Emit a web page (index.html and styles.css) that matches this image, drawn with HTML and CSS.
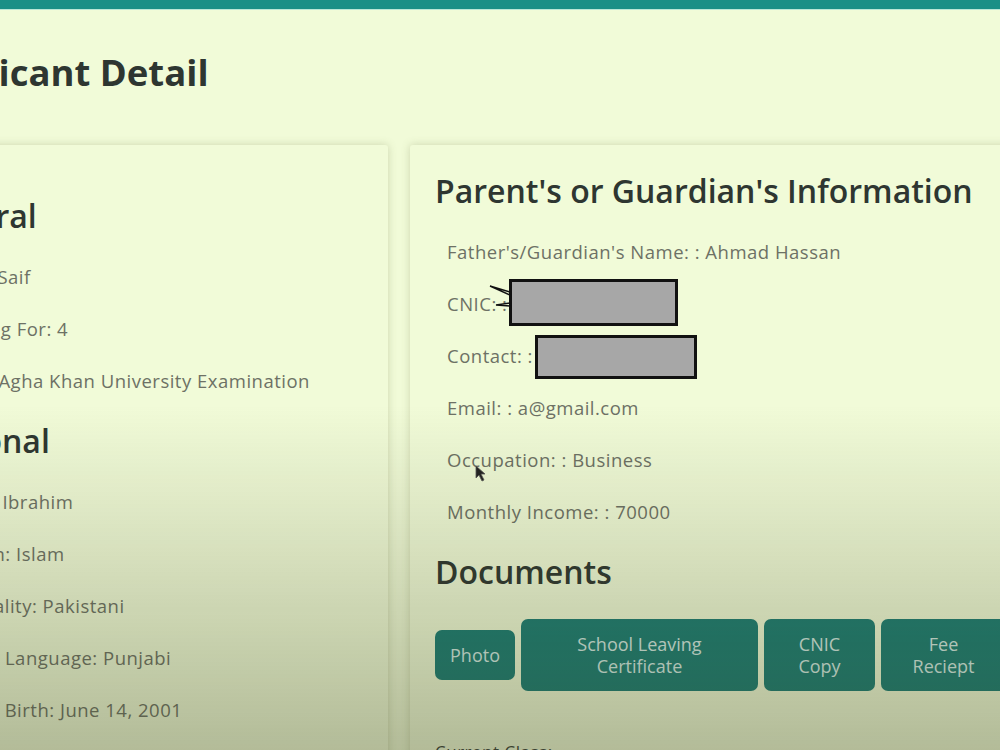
FILE: index.html
```
<!DOCTYPE html>
<html lang="en">
<head>
    <meta charset="UTF-8">
    <meta name="viewport" content="width=device-width, initial-scale=1.0">
    <title>Applicant Detail</title>
    <link rel="stylesheet" href="styles.css">
</head>
<body>
    <header class="topbar"></header>

    <main class="page">
        <h1 class="page-title">Applicant Detail</h1>

        <div class="columns">
            <section class="card card-left">
                <h2>General</h2>
                <p class="item">Name: Saif</p>
                <p class="item">Applying For: 4</p>
                <p class="item">Board: Agha Khan University Examination</p>

                <h2>Personal</h2>
                <p class="item">Father: Ibrahim</p>
                <p class="item">Religion: Islam</p>
                <p class="item">Nationality: Pakistani</p>
                <p class="item">Mother Language: Punjabi</p>
                <p class="item">Date of Birth: June 14, 2001</p>
            </section>

            <section class="card card-right">
                <h2>Parent's or Guardian's Information</h2>
                <p class="item">Father's/Guardian's Name: : Ahmad Hassan</p>
                <p class="item">CNIC: : <span class="redact redact-cnic"><svg class="tail" width="24" height="26" viewBox="0 0 24 26"><path d="M22 7 L2 1 L22 10 M22 18 L8 20 L22 21" fill="none" stroke="#111" stroke-width="1.4"/></svg></span></p>
                <p class="item">Contact: : <span class="redact redact-contact"></span></p>
                <p class="item">Email: : a@gmail.com</p>
                <p class="item">Occupation: : Business<svg class="cursor" width="12" height="18" viewBox="0 0 12 18"><path d="M1 1 L1 13 L4 10 L7 16 L9 15 L6 9 L10 9 Z" fill="#222" stroke="#555" stroke-width="0.8"/></svg></p>
                <p class="item">Monthly Income: : 70000</p>

                <h2>Documents</h2>
                <div class="docs">
                    <button class="doc-btn doc-btn-short">Photo</button>
                    <button class="doc-btn">School Leaving Certificate</button>
                    <button class="doc-btn">CNIC Copy</button>
                    <button class="doc-btn">Fee Reciept</button>
                </div>

                <p class="item item-small">Current Class:</p>
            </section>
        </div>
    </main>
</body>
</html>
```

FILE: styles.css
```
/* Applicant detail page */
html, body {
    height: 100%;
}
body {
    margin: 0;
    overflow: hidden;
    font-family: "Open Sans", "Noto Sans", sans-serif;
    background-color: #f1fbd8;
    color: #6d7165;
}
/* darkening toward the bottom of the captured frame */
body::after {
    content: "";
    position: fixed;
    inset: 0;
    pointer-events: none;
    background: linear-gradient(to bottom, rgba(60, 66, 30, 0) 54%, rgba(60, 66, 30, 0.16) 76%, rgba(60, 66, 30, 0.34) 100%);
}
.topbar {
    height: 9px;
    background-color: #1a8f86;
    border-bottom: 1px solid #b9e6d6;
}
.page {
    margin-left: -104px;
}
.page-title {
    margin: 0;
    padding: 42px 0 0 20px;
    height: 92px;
    box-sizing: border-box;
    font-size: 36.5px;
    font-weight: 700;
    line-height: 40px;
    color: #2e3631;
}
.columns {
    display: grid;
    grid-template-columns: 492px 660px;
    gap: 22px;
    margin-top: 43px;
}
.card {
    background-color: #f1fbd8;
    padding: 12px 25px;
    box-shadow: 0 0 8px rgba(120, 130, 80, 0.3);
    border-radius: 3px;
    min-height: 640px;
}
.card h2 {
    margin: 12px 0 13px;
    font-size: 32px;
    font-weight: 600;
    line-height: 44px;
    color: #2e3631;
}
.card-left h2 {
    margin-left: -6px;
}
.card-left h2:first-child {
    margin-top: 37px;
}
.item {
    position: relative;
    margin: 0;
    padding-left: 12px;
    font-size: 18.5px;
    letter-spacing: 0.5px;
    line-height: 52px;
    height: 52px;
    white-space: nowrap;
}
.redact {
    position: relative;
    top: -4px;
    display: inline-block;
    vertical-align: middle;
    box-sizing: border-box;
    background-color: #a7a7a7;
    border: 3px solid #111;
}
.redact-cnic {
    width: 169px;
    height: 47px;
    margin-left: -4px;
}
.redact-contact {
    width: 162px;
    height: 44px;
    margin-left: -3px;
    top: -1px;
}
.tail {
    position: absolute;
    left: -24px;
    top: 3px;
}
.cursor {
    position: absolute;
    left: 40px;
    top: 31px;
}
.docs {
    display: grid;
    grid-template-columns: 80px 237px 111px 125px;
    gap: 6px;
    align-items: center;
    margin: 25px 0 35px;
}
.doc-btn {
    padding: 14px 22px;
    border: none;
    border-radius: 7px;
    background-color: #1b7d74;
    color: #d6ece7;
    font-family: "Open Sans", "Noto Sans", sans-serif;
    font-size: 18px;
    line-height: 22px;
    cursor: pointer;
}
.doc-btn-short {
    padding: 14px 6px;
}
.item-small {
    padding-left: 0;
    color: #3a413b;
    font-size: 17px;
}
```
